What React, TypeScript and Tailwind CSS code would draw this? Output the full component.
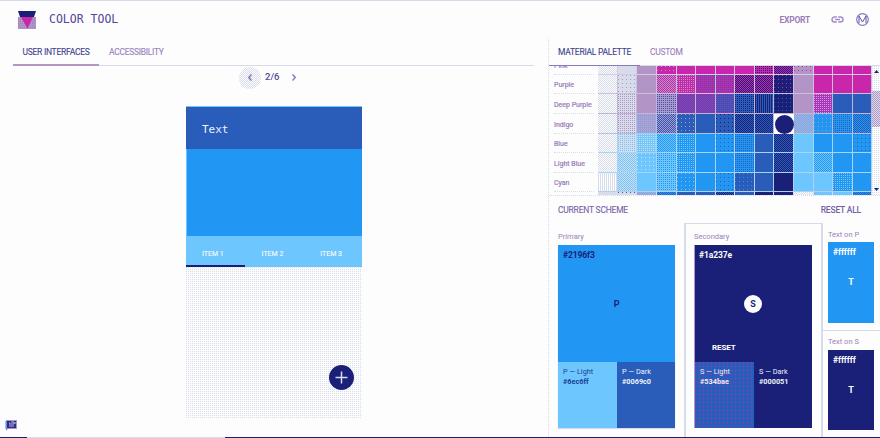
import React from 'react';

// Background fill + texture ink, one entry per swatch tone.
const fill: Record<string, string> = {
  W: 'bg-[#fdfdfd]', G: 'bg-[#d6dcea]', L: 'bg-[#b294c7]', M: 'bg-[#c926ab]',
  B: 'bg-[#2a5db9]', A: 'bg-[#2196f3]', K: 'bg-[#6ec6ff]', N: 'bg-[#1a1f78]',
};
const ink: Record<string, string> = {
  W: 'text-[#fdfdfd]', G: 'text-[#d6dcea]', L: 'text-[#b294c7]', M: 'text-[#c926ab]',
  B: 'text-[#2a5db9]', A: 'text-[#2196f3]', K: 'text-[#6ec6ff]', N: 'text-[#1a1f78]',
};
// 1: sparse dots, 2: regular dots, 3: checker, 4: vertical stripes
const texture: Record<string, string> = {
  '1': 'bg-[conic-gradient(from_270deg_at_1px_1px,currentColor_90deg,transparent_0)] bg-[length:4px_4px]',
  '2': 'bg-[conic-gradient(from_270deg_at_1px_1px,currentColor_90deg,transparent_0)] bg-[length:2px_2px]',
  '3': 'bg-[repeating-conic-gradient(currentColor_0_25%,transparent_0_50%)] bg-[length:2px_2px]',
  '4': 'bg-[linear-gradient(90deg,currentColor_50%,transparent_50%)] bg-[length:2px_2px]',
};

const rows = [
  { name: 'Pink', h: 'h-[9px] items-end', line: 'border-[#d6cbe2]', cells: 'WG3 G L ML1 M M M M MN2 NM3 LM1 M M M' },
  { name: 'Purple', h: 'h-[19px]', line: 'border-[#cbbfdb]', cells: 'WG3 GL1 L ML3 ML2 MB2 MB2 MN3 NM3 NM1 L M M M' },
  { name: 'Deep Purple', h: 'h-[20px]', line: 'border-[#c3b4d6]', cells: 'WG3 GL2 L LB2 BM3 MB3 BM2 BN2 BN4 NB1 L MK2 B B' },
  { name: 'Indigo', h: 'h-[20px]', line: 'border-[#b4bfe0]', cells: 'WG3 GL2 LK2 BL3 BL1 B BN1 BN3 BN3 * KL3 AL1 AB2 AB3' },
  { name: 'Blue', h: 'h-[19px]', line: 'border-[#a5d5f7]', cells: 'WG3 GK2 KG2 KA3 AK2 A AB1 AB2 B NB3 K A A AB1' },
  { name: 'Light Blue', h: 'h-[20px]', line: 'border-[#a5d5f7]', cells: 'WG3 GK3 KG1 KA2 AK2 A A AB2 B NB3 K KA3 A A' },
  { name: 'Cyan', h: 'h-[19px]', line: 'border-[#b4cfec]', cells: 'WG4 GK3 K KA2 AK1 A AB1 BA1 B N K K AK2 A' },
  { name: '', h: 'h-[4px]', line: 'border-[#d6dcea]', cells: 'G GB1 LK3 AB3 B B BN3 B N N WG3 K K AB3' },
];

function Cell({ code, line }: { code: string; line: string }) {
  if (code === '*') {
    return (
      <div className="flex items-center justify-center bg-white">
        <div className="size-[19px] rounded-full bg-[#1a1f78]" />
      </div>
    );
  }
  const tex = code.length > 1 ? `${ink[code[1]]} ${texture[code[2]]}` : '';
  return <div className={`border-r border-b ${line} ${fill[code[0]]} ${tex}`} />;
}

function Palette() {
  return (
    <div className="flex h-[130px] border-b border-dotted border-[#d6dcea]">
      <div className="w-[323px] overflow-hidden">
        {rows.map((row) => (
          <div key={row.name} className={`flex overflow-hidden ${row.h}`}>
            <div className={`flex w-[49px] shrink-0 items-center pl-[5px] text-[7px] text-[#9a7fbb] [-webkit-text-stroke:0.2px] ${row.name === 'Pink' ? 'h-[19px]' : 'h-full'}`}>
              <span className="flex h-full w-[40px] items-center border-b border-dotted border-[#d6dcea] pt-[3px] whitespace-nowrap">{row.name}</span>
            </div>
            <div className="grid h-full w-[274px] grid-cols-[20px_19px_20px_20px_19px_20px_19px_20px_19px_20px_20px_19px_20px_19px]">
              {row.cells.split(' ').map((code, i) => <Cell key={i} code={code} line={row.line} />)}
            </div>
          </div>
        ))}
      </div>
      <div className="flex w-[8px] flex-col items-center bg-[#fdfdfd] bg-[conic-gradient(from_270deg_at_1px_1px,#d6dcea_90deg,transparent_0)] bg-[length:2px_2px]">
        <svg className="mt-[4px] h-[3px] w-[5px] shrink-0" viewBox="0 0 5 3"><path d="M0 3 2.5 0 5 3Z" fill="#1a1f78" /></svg>
        <div className="mt-[18px] h-[36px] w-full bg-[#d6dcea] bg-[repeating-conic-gradient(#b294c7_0_25%,transparent_0_50%)] bg-[length:2px_2px]" />
        <svg className="mt-auto mb-[4px] h-[3px] w-[5px] shrink-0" viewBox="0 0 5 3"><path d="M0 0 2.5 3 5 0Z" fill="#1a1f78" /></svg>
      </div>
    </div>
  );
}

function Phone() {
  return (
    <div className="relative ml-[186px] flex h-[313px] w-[176px] shrink-0 flex-col">
      <div className="flex h-[43px] items-center border-t border-[#6ec6ff] bg-[#2a5db9] pt-[5px] pl-[16px] font-['DejaVu_Sans_Mono',monospace] text-[11px] text-[#eaf5fd]">Text</div>
      <div className="h-[87px] border-l border-[#6ec6ff] bg-[#2196f3]" />
      <div className="grid h-[31px] grid-cols-3 bg-[#6ec6ff] text-[7px] text-[#f4f8fc] [-webkit-text-stroke:0.15px]">
        <span className="flex items-center justify-center border-b-2 border-[#1a1f78] pt-[7px] pr-[5px]">ITEM 1</span>
        <span className="flex items-center justify-center pt-[5px] pr-[3px]">ITEM 2</span>
        <span className="flex items-center justify-center pt-[5px] pr-[3px]">ITEM 3</span>
      </div>
      <div className="flex-1 bg-[#fdfdfd] bg-[conic-gradient(from_270deg_at_1px_1px,#d6dcea_90deg,transparent_0)] bg-[length:2px_2px]" />
      <div className="absolute right-[8px] bottom-[29px] flex size-[25px] items-center justify-center rounded-full bg-[#1a1f78]">
        <svg className="size-[13px]" viewBox="0 0 13 13" strokeWidth="1.5"><path d="M.5 6.5h12" stroke="#c5e3fa" /><path d="M6.5.5v12" stroke="#e5d9ed" /></svg>
      </div>
    </div>
  );
}

function ShadeRow({ letter, light, dark, secondary }: { letter: string; light: string; dark: string; secondary?: boolean }) {
  return (
    <div className="flex h-[66px] text-[7.3px] leading-[10px]">
      <div className={`w-[59px] pt-[5px] pl-[5px] ${secondary ? 'bg-[#2a5db9] bg-[conic-gradient(from_270deg_at_1px_1px,#c926ab_90deg,transparent_0)] bg-[length:4px_4px] text-[#f1e8f5]' : 'bg-[#6ec6ff] text-[#1a3d94]'}`}>
        <div>{letter} — Light</div><div className="font-bold">{light}</div>
      </div>
      <div className={`flex-1 pt-[5px] pl-[5px] text-[#eaf3fc] ${secondary ? 'bg-[#1a1f78]' : 'bg-[#2a5db9]'}`}>
        <div>{letter} — Dark</div><div className="font-bold">{dark}</div>
      </div>
    </div>
  );
}

function Scheme() {
  return (
    <div className="flex h-[241px] flex-col">
      <div className="flex h-[27px] items-center justify-between pt-[2px] pr-[19px] pl-[9px] text-[8.5px] text-[#775fa8]">
        <span className="tracking-[-0.22px] [-webkit-text-stroke:0.1px]">CURRENT SCHEME</span>
        <span className="font-medium tracking-[-0.2px]">RESET ALL</span>
      </div>
      <div className="flex h-[214px] text-[7.5px] text-[#9a7fbb]">
        <div className="w-[135px] pt-[8px] pl-[9px]">
          <div className="flex h-[14px] items-center pb-[2px]">Primary</div>
          <div className="w-[117px] shadow-[0_1px_1px_#d6dcea]">
            <div className="flex h-[117px] flex-col bg-[#2196f3] pt-[5px] pl-[5px] text-[8.5px] font-bold leading-[10px] tracking-[-0.1px] text-[#1a1f78]">
              #2196f3
              <span className="mt-[39px] pr-[5px] text-center text-[9px]">P</span>
            </div>
            <ShadeRow letter="P" light="#6ec6ff" dark="#0069c0" />
          </div>
        </div>
        <div className="w-[139px] border-x-2 border-t border-[#d6dcea] pt-[7px] pl-[8px]">
          <div className="flex h-[14px] items-center pb-[2px]">Secondary</div>
          <div className="w-[118px] border-l border-[#b294c7]">
            <div className="flex h-[117px] flex-col bg-[#1a1f78] pt-[5px] pl-[4px] text-[8.5px] font-bold leading-[10px] tracking-[-0.1px] text-[#fdfdfd]">
              #1a237e
              <span className="mt-[35px] -ml-[5px] flex size-[18px] items-center justify-center self-center rounded-full bg-[#fdfdfd] text-[9px] text-[#1a1f78]">S</span>
              <span className="mt-[30px] pl-[13px] text-[8px]">RESET</span>
            </div>
            <ShadeRow letter="S" light="#534bae" dark="#000051" secondary />
          </div>
        </div>
        <div className="flex flex-1 flex-col">
          <div className="h-[108px] border-b border-[#d6dcea] pt-[5px] pl-[5px]">
            <div className="flex h-[14px] items-center pb-px">Text on P</div>
            <div className="flex h-[81px] w-[46px] flex-col bg-[#2196f3] pt-[5px] pl-[5px] text-[8.5px] font-bold leading-[10px] tracking-[-0.1px] text-[#fdfdfd]">
              #ffffff<span className="mt-[20px] pr-[5px] text-center text-[9px]">T</span>
            </div>
          </div>
          <div className="pt-[4px] pl-[5px]">
            <div className="flex h-[15px] items-center pb-[2px]">Text on S</div>
            <div className="flex h-[80px] w-[46px] flex-col bg-[#1a1f78] pt-[5px] pl-[5px] text-[8.5px] font-bold leading-[10px] tracking-[-0.1px] text-[#fdfdfd]">
              #ffffff<span className="mt-[20px] pr-[5px] text-center text-[9px]">T</span>
            </div>
          </div>
        </div>
      </div>
    </div>
  );
}

export default function App() {
  return (
    <div className="flex h-[438px] w-[880px] flex-col overflow-hidden bg-[#fdfdfd] font-[Roboto,sans-serif]">
      <header className="flex h-[38px] shrink-0 items-center border-t border-[#d6dcea]">
        <svg className="ml-[18px] size-[18px]" viewBox="0 0 18 18">
          <defs><pattern id="haze" width="2" height="2" patternUnits="userSpaceOnUse"><rect width="2" height="2" fill="#b294c7" /><path d="M0 0h1v1H0z" fill="#9a7fbb" /></pattern></defs>
          <path d="M0 6h18v12H0z" fill="url(#haze)" /><path d="M3 6h12L9.5 17.5Z" fill="#c926ab" /><path d="M0 0h18l-2 6H2Z" fill="#1a1f78" />
        </svg>
        <h1 className="ml-[13px] font-['DejaVu_Sans_Mono',monospace] text-[11.5px] text-[#4f479a]"><span className="inline-block scale-y-110">COLOR TOOL</span></h1>
        <span className="ml-auto pt-px text-[8.5px] font-bold tracking-[-0.25px] text-[#9a7fbb]">EXPORT</span>
        <svg className="ml-[21px] h-[7px] w-[13px]" viewBox="0 0 13 7" fill="none" stroke="#a68bc4" strokeWidth="1.4"><path d="M5.8 1H3.5a2.5 2.5 0 0 0 0 5h2.3M7.2 1h2.3a2.5 2.5 0 0 1 0 5H7.2M4 3.5h5" /></svg>
        <svg className="mr-[11px] ml-[12px] size-[13px]" viewBox="0 0 13 13" fill="none" strokeWidth="1.2"><circle cx="6.5" cy="6.5" r="5.8" stroke="#8b78b7" /><path d="M2.7 2.7 6.5 9l3.8-6.3M3 3v7.2M10 3v7.2" stroke="#5a55a5" strokeWidth="1" /></svg>
      </header>
      <div className="flex h-[399px]">
        <main className="flex w-[548px] flex-col">
          <nav className="ml-[13px] flex h-[28px] w-[521px] shrink-0 border-b border-[#d6dcea] text-[8.5px]">
            <span className="-mb-px flex w-[86px] items-center justify-center border-b-2 border-[#b294c7] pt-[2px] tracking-[-0.27px] text-[#41408e] [-webkit-text-stroke:0.1px]">USER INTERFACES</span>
            <span className="ml-[10px] flex items-center pt-[2px] tracking-[-0.3px] text-[#9a7fbb] [-webkit-text-stroke:0.1px]">ACCESSIBILITY</span>
          </nav>
          <div className="ml-[239px] flex h-[23px] shrink-0 items-center">
            <span className="flex size-[22px] items-center justify-center rounded-full bg-[#fdfdfd] bg-[repeating-conic-gradient(#d6dcea_0_25%,transparent_0_50%)] bg-[length:2px_2px]">
              <svg className="h-[7px] w-[4px]" viewBox="0 0 4 7" fill="none" stroke="#8b6fb2" strokeWidth="1.5"><path d="M3.5.5.8 3.5l2.7 3" /></svg>
            </span>
            <span className="ml-[4px] w-[27px] text-[9.5px] font-medium text-[#514b9a]">2/6</span>
            <svg className="h-[7px] w-[4px]" viewBox="0 0 4 7" fill="none" stroke="#8b78b7" strokeWidth="1.4"><path d="m.5.5 2.7 3-2.7 3" /></svg>
          </div>
          <div className="h-[17px] shrink-0" />
          <Phone />
          <svg className="ml-[5px] h-[12px] w-[13px] shrink-0" viewBox="0 0 13 12"><path d="M1 1h11v9H3l-2 2Z" fill="#b294c7" /><path d="M2 2h9v7H2Z" fill="#2b2d84" /><path d="M1 2v8" stroke="#2196f3" /><path d="M4 4h1v4M6 3h3v2H6M6 7h3M10 3v2" fill="none" stroke="#b9b5dc" /></svg>
        </main>
        <section className="w-[332px] border-l border-dotted border-[#d6dcea]">
          <nav className="flex h-[28px] border-b border-[#d6dcea] text-[8.5px]">
            <span className="-mb-px flex w-[91px] items-center border-b border-[#8b78b7] pt-px pl-[9px] tracking-[-0.25px] whitespace-nowrap text-[#41408e] [-webkit-text-stroke:0.1px]">MATERIAL PALETTE</span>
            <span className="ml-[10px] flex items-center pt-[2px] tracking-[-0.3px] text-[#9a7fbb] [-webkit-text-stroke:0.1px]">CUSTOM</span>
          </nav>
          <Palette />
          <Scheme />
        </section>
      </div>
      <footer className="flex h-px shrink-0 bg-[#1a1f78]"><div className="ml-[27px] w-[198px] bg-[#d6dcea]" /></footer>
    </div>
  );
}
